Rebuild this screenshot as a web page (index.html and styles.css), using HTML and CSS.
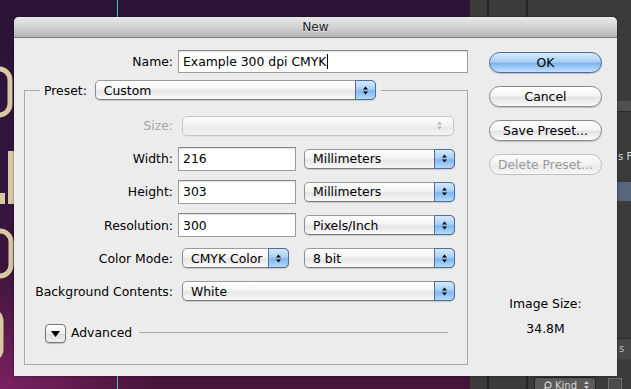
FILE: index.html
```html
<!DOCTYPE html>
<html>
<head>
<meta charset="utf-8">
<title>New</title>
<link rel="stylesheet" href="styles.css">
</head>
<body>
<div class="desktop">
  <svg class="letters" width="14" height="389" viewBox="0 0 14 389">
    <g fill="none" stroke="#d8c9a2" stroke-width="5">
      <rect x="-22" y="69" width="32" height="46" rx="11"/>
      <rect x="-21" y="231" width="32" height="45" rx="11"/>
      <rect x="-29" y="310" width="30" height="50" rx="11"/>
    </g>
    <g fill="#d8c9a2">
      <rect x="8" y="151" width="6" height="53"/>
      <rect x="0" y="193" width="5" height="11"/>
    </g>
  </svg>
  <div class="cyan"></div>

  <div class="panels">
    <div class="pline p1"></div>
    <div class="pline p2"></div>
    <div class="tabband"></div>
    <div class="ptext ptext1">s F</div>
    <div class="selrow"></div>
    <div class="band2"><span class="ptext2">s</span></div>
    <div class="kind">
      <svg width="9" height="9" viewBox="0 0 9 9"><circle cx="5" cy="4" r="3" fill="none" stroke="#d0d0d0" stroke-width="1.3"/><path d="M3 6L1 8.5" stroke="#d0d0d0" stroke-width="1.5"/></svg>
      <span>Kind</span>
      <svg class="kindarr" width="5" height="8" viewBox="0 0 5 8"><path d="M2.5 0L5 3H0Z M0 5H5L2.5 8Z" fill="#cfcfcf"/></svg>
    </div>
    <div class="kindicon"></div>
  </div>

  <div class="dialog">
    <div class="titlebar">New</div>
    <div class="dbody">
      <div class="maincol">
        <div class="row namerow">
          <span class="lbl lbl-name">Name:</span>
          <div class="field namefield">Example 300 dpi CMYK<span class="caret"></span></div>
        </div>

        <fieldset class="group">
          <legend class="legend"><span class="legend-in">
            <span class="legend-lbl">Preset:</span>
            <span class="popup w-preset"><span class="ptxt">Custom</span><span class="arrows"><svg width="5" height="9" viewBox="0 0 5 9"><path d="M2.5 0.5L5 3.5H0Z M0 5.5H5L2.5 8.5Z" fill="#000"/></svg></span></span>
          </span></legend>

          <div class="rows">
            <div class="row">
              <span class="lbl dis">Size:</span>
              <span class="popup disabled w-full"><span class="ptxt"></span><span class="arrows plain"><svg width="5" height="9" viewBox="0 0 5 9"><path d="M2.5 0.5L5 3.5H0Z M0 5.5H5L2.5 8.5Z" fill="#b4b4b4"/></svg></span></span>
            </div>
            <div class="row">
              <span class="lbl">Width:</span>
              <div class="field numfield">216</div>
              <span class="popup w-unit"><span class="ptxt">Millimeters</span><span class="arrows"><svg width="5" height="9" viewBox="0 0 5 9"><path d="M2.5 0.5L5 3.5H0Z M0 5.5H5L2.5 8.5Z" fill="#000"/></svg></span></span>
            </div>
            <div class="row">
              <span class="lbl">Height:</span>
              <div class="field numfield">303</div>
              <span class="popup w-unit"><span class="ptxt">Millimeters</span><span class="arrows"><svg width="5" height="9" viewBox="0 0 5 9"><path d="M2.5 0.5L5 3.5H0Z M0 5.5H5L2.5 8.5Z" fill="#000"/></svg></span></span>
            </div>
            <div class="row">
              <span class="lbl">Resolution:</span>
              <div class="field numfield">300</div>
              <span class="popup w-unit"><span class="ptxt">Pixels/Inch</span><span class="arrows"><svg width="5" height="9" viewBox="0 0 5 9"><path d="M2.5 0.5L5 3.5H0Z M0 5.5H5L2.5 8.5Z" fill="#000"/></svg></span></span>
            </div>
            <div class="row">
              <span class="lbl">Color Mode:</span>
              <span class="popup w-mode"><span class="ptxt">CMYK Color</span><span class="arrows"><svg width="5" height="9" viewBox="0 0 5 9"><path d="M2.5 0.5L5 3.5H0Z M0 5.5H5L2.5 8.5Z" fill="#000"/></svg></span></span>
              <span class="popup w-bits"><span class="ptxt">8 bit</span><span class="arrows"><svg width="5" height="9" viewBox="0 0 5 9"><path d="M2.5 0.5L5 3.5H0Z M0 5.5H5L2.5 8.5Z" fill="#000"/></svg></span></span>
            </div>
            <div class="row">
              <span class="lbl">Background Contents:</span>
              <span class="popup w-full w-bg"><span class="ptxt">White</span><span class="arrows"><svg width="5" height="9" viewBox="0 0 5 9"><path d="M2.5 0.5L5 3.5H0Z M0 5.5H5L2.5 8.5Z" fill="#000"/></svg></span></span>
            </div>
          </div>

          <div class="advanced">
            <span class="disclose"><svg width="9" height="6" viewBox="0 0 9 6"><path d="M0 0H9L4.5 6Z" fill="#000"/></svg></span>
            <span class="adv-lbl">Advanced</span>
            <span class="adv-line"></span>
          </div>
        </fieldset>
      </div>

      <div class="sidecol">
        <div class="btn default">OK</div>
        <div class="btn">Cancel</div>
        <div class="btn">Save Preset...</div>
        <div class="btn disabled">Delete Preset...</div>
        <div class="imgsize">Image Size:</div>
        <div class="imgval">34.8M</div>
      </div>
    </div>
  </div>
</div>
</body>
</html>
```

FILE: styles.css
```css
html, body {
  margin: 0;
  padding: 0;
  background: #2a1236;
}

.desktop {
  position: relative;
  width: 631px;
  height: 389px;
  overflow: hidden;
  font-family: "DejaVu Sans", "Liberation Sans", sans-serif;
  font-size: 12.4px;
  color: #000;
  background:
    radial-gradient(ellipse 160px 120px at 0 389px, rgba(130, 36, 104, 0.85), rgba(130, 36, 104, 0) 100%),
    linear-gradient(#2a1335 0%, #331540 45%, #461438 100%);
}

.letters {
  position: absolute;
  left: 0;
  top: 0;
}

.cyan {
  position: absolute;
  left: 117px;
  top: 0;
  width: 1px;
  height: 389px;
  background: #46bcd3;
}

/* Photoshop panels at the right */
.panels {
  position: absolute;
  left: 470px;
  top: 0;
  right: 0;
  bottom: 0;
  background: #3b3b3b;
}
.pline {
  position: absolute;
  top: 0;
  bottom: 0;
  width: 2px;
  background: #262626;
}
.p1 { left: 17px; }
.p2 { left: 56px; }
.tabband {
  position: absolute;
  left: 0;
  right: 0;
  top: 101px;
  height: 10px;
  background: #505050;
  border-bottom: 1px solid #2a2a2a;
}
.ptext {
  position: absolute;
  color: #d8d8d8;
  font-size: 10px;
  white-space: nowrap;
}
.ptext1 { left: 148px; top: 151px; }
.selrow {
  position: absolute;
  left: 0;
  right: 0;
  top: 182px;
  height: 19px;
  background: #56657a;
}
.band2 {
  position: absolute;
  left: 0;
  right: 0;
  top: 338px;
  height: 20px;
  background: #474747;
  border-top: 1px solid #2d2d2d;
}
.ptext2 {
  position: absolute;
  left: 149px;
  top: 4px;
  color: #bdbdbd;
  font-size: 10px;
}
.kind {
  position: absolute;
  left: 64px;
  top: 377px;
  width: 62px;
  height: 16px;
  box-sizing: border-box;
  border: 1px solid #242424;
  border-radius: 3px;
  background: #5a5a5a;
  display: flex;
  align-items: center;
  gap: 3px;
  padding-left: 8px;
  color: #d6d6d6;
  font-size: 10px;
}
.kindarr { margin-left: auto; margin-right: 6px; }
.kindicon {
  position: absolute;
  left: 138px;
  top: 378px;
  width: 14px;
  height: 14px;
  box-sizing: border-box;
  border: 1px solid #707070;
  background: #4a4a4a;
}

/* Dialog window */
.dialog {
  position: absolute;
  left: 14px;
  top: 17px;
  width: 603px;
  height: 359px;
  background: #ececec;
  border-radius: 5px 5px 0 0;
  box-shadow: 0 0 3px rgba(0, 0, 0, 0.45);
  display: flex;
  flex-direction: column;
}

.titlebar {
  height: 20px;
  line-height: 21px;
  border-bottom: 1px solid #7c7c7c;
  border-radius: 5px 5px 0 0;
  background: linear-gradient(#e9e9e9, #d2d2d2 50%, #b4b4b4);
  text-align: center;
  color: #262626;
  text-shadow: 0 1px 0 rgba(255, 255, 255, 0.5);
  font-size: 12.2px;
}

.dbody {
  flex: 1;
  display: flex;
  padding: 12px 15px 11px 10px;
  gap: 21px;
}

.maincol {
  width: 444px;
  display: flex;
  flex-direction: column;
}

.row {
  display: flex;
  align-items: center;
  height: 24px;
}
.namerow { height: 23px; }

.lbl {
  flex: none;
  width: 148px;
  margin-right: 5px;
  text-align: right;
  white-space: nowrap;
}
.lbl-name { width: 149px; }
.lbl.dis { color: #a6a6a6; }

.field {
  box-sizing: border-box;
  height: 23px;
  border: 1px solid #9c9c9c;
  border-top-color: #858585;
  background: #fff;
  box-shadow: inset 0 1px 1px rgba(0, 0, 0, 0.12);
  padding-left: 4px;
  display: flex;
  align-items: center;
  white-space: nowrap;
}
.namefield { width: 290px; }
.numfield { width: 118px; height: 24px; }

.caret {
  display: inline-block;
  width: 1px;
  height: 15px;
  margin-left: 1px;
  background: #000;
}

/* Pop-up buttons */
.popup {
  box-sizing: border-box;
  height: 20px;
  border: 1px solid #8d8d8d;
  border-top-color: #9a9a9a;
  border-bottom-color: #7a7a7a;
  border-radius: 5px;
  background: linear-gradient(#ffffff, #f4f4f4 45%, #e6e6e6 55%, #f8f8f8);
  box-shadow: 0 1px 1px rgba(0, 0, 0, 0.15);
  display: flex;
  align-items: center;
  padding-left: 8px;
  white-space: nowrap;
  flex: none;
}
.ptxt { flex: 1; }
.arrows {
  box-sizing: border-box;
  width: 21px;
  height: 20px;
  margin: -1px -1px -1px 0;
  border: 1px solid #4c6f9f;
  border-radius: 0 5px 5px 0;
  background: linear-gradient(#d6e9fb, #a9d0f5 45%, #7fb6ec 55%, #b6dafb);
  display: flex;
  align-items: center;
  justify-content: center;
}
.arrows.plain {
  border: none;
  background: none;
  margin-right: 3px;
}
.popup.disabled {
  border-color: #c6c6c6;
  background: linear-gradient(#fbfbfb, #f1f1f1 50%, #eaeaea 55%, #f3f3f3);
  box-shadow: 0 1px 1px rgba(0, 0, 0, 0.06);
}

.w-preset { width: 281px; }
.w-full { width: 272px; margin-left: 4px; }
.w-bg { width: 273px; }
.w-unit { width: 151px; margin-left: 8px; }
.w-mode { width: 107px; margin-left: 4px; }
.w-bits { width: 151px; margin-left: 15px; }

/* Group box */
.group {
  margin: 7px 0 0;
  padding: 0 0 20px;
  min-width: 0;
  border: 1px solid #a9a9a9;
}
.legend {
  margin-left: 15px;
  padding: 0 5px 0 4px;
}
.legend-in {
  display: flex;
  align-items: center;
  height: 20px;
}
.legend-lbl {
  margin-right: 8px;
}

.rows {
  margin-top: 13.5px;
  display: flex;
  flex-direction: column;
  gap: 9.2px;
}

.advanced {
  margin-top: 20.5px;
  height: 20px;
  display: flex;
  align-items: center;
  padding-left: 20px;
}
.disclose {
  box-sizing: border-box;
  width: 21px;
  height: 19px;
  border: 1px solid #777;
  border-radius: 4px;
  background: linear-gradient(#ffffff, #ededed 50%, #dcdcdc 55%, #f2f2f2);
  box-shadow: 0 1px 1px rgba(0, 0, 0, 0.2);
  display: flex;
  align-items: center;
  justify-content: center;
}
.adv-lbl {
  margin-left: 5px;
  margin-top: -3px;
}
.adv-line {
  flex: 1;
  height: 1px;
  background: #ababab;
  margin: -3px 19px 0 7px;
}

/* Right buttons column */
.sidecol {
  width: 113px;
  padding-top: 2px;
  display: flex;
  flex-direction: column;
  gap: 13px;
}
.btn {
  box-sizing: border-box;
  height: 21px;
  border: 1px solid #8a8a8a;
  border-radius: 11px;
  background: linear-gradient(#ffffff, #f5f5f5 45%, #e3e3e3 55%, #fbfbfb);
  box-shadow: 0 1px 1px rgba(0, 0, 0, 0.2);
  display: flex;
  align-items: center;
  justify-content: center;
  white-space: nowrap;
}
.btn.default {
  border-color: #4a6b9b;
  background: linear-gradient(#d7eafc, #abd0f5 45%, #7eb5ec 55%, #c2e2fd);
}
.btn.disabled {
  border-color: #c0c0c0;
  color: #9a9a9a;
  background: linear-gradient(#fbfbfb, #f2f2f2 50%, #eaeaea 55%, #f5f5f5);
  box-shadow: none;
}
.imgsize {
  margin-top: 108px;
  text-align: center;
}
.imgval {
  margin-top: -3px;
  text-align: center;
}
```
